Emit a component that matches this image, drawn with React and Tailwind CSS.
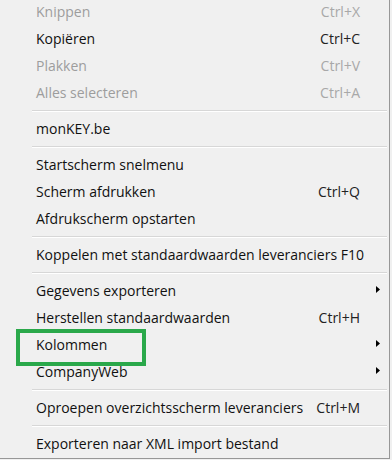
const GROUPS = [
  [
    { label: 'Knippen', shortcut: 'Ctrl+X', disabled: true },
    { label: 'Kopiëren', shortcut: 'Ctrl+C' },
    { label: 'Plakken', shortcut: 'Ctrl+V', disabled: true },
    { label: 'Alles selecteren', shortcut: 'Ctrl+A', disabled: true },
  ],
  [{ label: 'monKEY.be' }],
  [
    { label: 'Startscherm snelmenu' },
    { label: 'Scherm afdrukken', shortcut: 'Ctrl+Q' },
    { label: 'Afdrukscherm opstarten' },
  ],
  [{ label: 'Koppelen met standaardwaarden leveranciers F10' }],
  [
    { label: 'Gegevens exporteren', submenu: true },
    { label: 'Herstellen standaardwaarden', shortcut: 'Ctrl+H' },
    { label: 'Kolommen', submenu: true, highlight: true },
    { label: 'CompanyWeb', submenu: true },
  ],
  [{ label: 'Oproepen overzichtsscherm leveranciers', shortcut: 'Ctrl+M' }],
  [{ label: 'Exporteren naar XML import bestand' }],
];

function Arrow() {
  return (
    <svg width="4" height="7" viewBox="0 0 4 7" className="shrink-0">
      <path d="M0 0 L4 3.5 L0 7 Z" fill="#000" />
    </svg>
  );
}

function MenuItem({ item }) {
  return (
    <div className="relative flex items-center h-[27px] pl-[36px] pr-[29px] whitespace-nowrap">
      {item.highlight && (
        <div className="absolute z-10 left-[16px] -top-[2px] w-[130px] h-[37px] border-4 border-[#2aa84a]" />
      )}
      <span className={item.disabled ? 'text-[#9d9d9d]' : 'text-[#111]'}>{item.label}</span>
      <span className="flex-1" />
      {item.shortcut && (
        <span className={item.disabled ? 'text-[#a8a8a8]' : 'text-[#222]'}>{item.shortcut}</span>
      )}
      {item.submenu && (
        <span className="absolute right-[9px] top-[9px] flex">
          <Arrow />
        </span>
      )}
    </div>
  );
}

export default function App() {
  return (
    <div className="w-[392px] h-[460px] bg-[#f0f0f0] overflow-hidden">
      <div
        className="w-[390px] -mt-[2px] pb-[1px] bg-[#f0f0f0] border-r border-b border-[#979797] text-[14px]"
        style={{ fontFamily: "'Open Sans', 'Liberation Sans', sans-serif" }}
      >
        {GROUPS.map((group, gi) => (
          <div key={gi}>
            {gi > 0 && (
              <div className="pl-[32px] pr-[2px] pt-[4px] pb-[3px]">
                <div className="h-px bg-[#d7d7d7]" />
                <div className="h-px bg-white" />
              </div>
            )}
            {group.map((item) => (
              <MenuItem key={item.label} item={item} />
            ))}
          </div>
        ))}
      </div>
    </div>
  );
}
